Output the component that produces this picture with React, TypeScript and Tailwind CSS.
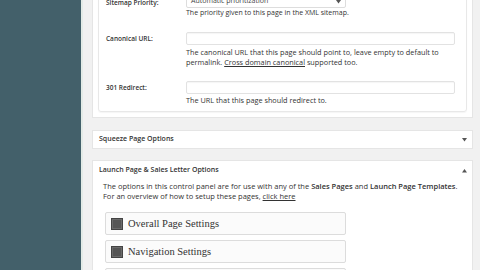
import React from "react";

const sans = { fontFamily: '"Open Sans", "Noto Sans", sans-serif' };
const serif = { fontFamily: '"Liberation Serif", "DejaVu Serif", serif' };

function Caret({ up = false }: { up?: boolean }) {
  return (
    <svg width="5" height="4" viewBox="0 0 5 4" className="shrink-0">
      <path d={up ? "M0 3.5 L5 3.5 L2.5 0 Z" : "M0 0 L5 0 L2.5 3.5 Z"} fill="#555" />
    </svg>
  );
}

function SettingBox({ label }: { label?: string }) {
  return (
    <div className="flex items-center gap-[5px] h-[23px] w-[241px] border border-[#dcdcdc] rounded-[2px] bg-[#fbfbfb] pl-[5px] shrink-0">
      <div className="w-[12px] h-[12px] bg-[#555] border border-[#444] shadow-[inset_0_0_0_1px_#6a6a6a]" />
      {label ? (
        <span className="text-[10.5px] text-[#333]" style={serif}>{label}</span>
      ) : null}
    </div>
  );
}

export default function App() {
  return (
    <div className="w-[480px] h-[270px] overflow-hidden flex bg-[#f1f1f1]" style={sans}>
      <div className="w-[81px] shrink-0 bg-[#43606a]" />
      <div className="w-[2px] shrink-0 bg-[#e3ebe7]" />
      <div className="flex-1 pl-[9px] pr-[7px] flex flex-col">
        {/* SEO meta box (scrolled) */}
        <div className="mt-[-11px] bg-white border border-[#e5e5e5] px-[5px] pt-[3px] pb-[5px]">
          <div className="border border-[#e8e8e8] rounded-[3px] pl-[7px] pr-[11px] pt-[1px] pb-[6px] shadow-[0_1px_1px_rgba(0,0,0,0.04)]">
            {/* Sitemap priority */}
            <div className="flex">
              <div className="w-[80px] shrink-0 pt-[3px] text-[6.5px] font-semibold text-[#333]">Sitemap Priority:</div>
              <div className="flex flex-col">
                <div className="h-[13px] w-[160px] border border-[#ddd] rounded-[2px] flex items-center justify-between pl-[4px] pr-[4px] text-[7px] text-[#444]">
                  <span>Automatic prioritization</span>
                  <Caret />
                </div>
                <div className="text-[7px] leading-[10px] text-[#333]">The priority given to this page in the XML sitemap.</div>
              </div>
            </div>
            {/* Canonical */}
            <div className="flex mt-[14px]">
              <div className="w-[80px] shrink-0 pt-[2px] text-[6.5px] font-semibold text-[#333]">Canonical URL:</div>
              <div className="flex flex-col flex-1">
                <div className="h-[13px] w-full border border-[#e2e2e2] rounded-[2px] shadow-[inset_0_1px_1px_rgba(0,0,0,0.04)]" />
                <div className="mt-[2px] text-[7.3px] leading-[10px] text-[#333]">
                  The canonical URL that this page should point to, leave empty to default to<br />
                  permalink. <span className="underline">Cross domain canonical</span> supported too.
                </div>
              </div>
            </div>
            {/* 301 */}
            <div className="flex mt-[14px]">
              <div className="w-[80px] shrink-0 pt-[2px] text-[6.5px] font-semibold text-[#333]">301 Redirect:</div>
              <div className="flex flex-col flex-1">
                <div className="h-[13px] w-full border border-[#e2e2e2] rounded-[2px] shadow-[inset_0_1px_1px_rgba(0,0,0,0.04)]" />
                <div className="mt-[1px] text-[7.3px] leading-[10px] text-[#333]">The URL that this page should redirect to.</div>
              </div>
            </div>
          </div>
        </div>

        {/* Squeeze Page Options */}
        <div className="mt-[12px] h-[19px] shrink-0 bg-white border border-[#e5e5e5] flex items-center justify-between pl-[6px] pr-[5px]">
          <span className="text-[7px] font-semibold text-[#333]">Squeeze Page Options</span>
          <Caret />
        </div>

        {/* Launch Page */}
        <div className="mt-[11px] bg-white border border-[#e5e5e5] flex flex-col">
          <div className="h-[19px] shrink-0 flex items-center justify-between pl-[6px] pr-[5px]">
            <span className="text-[7px] font-semibold text-[#333]">Launch Page &amp; Sales Letter Options</span>
            <Caret up />
          </div>
          <div className="px-[10px] pt-[1px]">
            <div className="text-[7.5px] leading-[10px] text-[#333]">
              The options in this control panel are for use with any of the <span className="font-semibold">Sales Pages</span> and <span className="font-semibold">Launch Page Templates</span>.<br />
              For an overview of how to setup these pages, <span className="underline">click here</span>
            </div>
            <div className="mt-[11px] flex flex-col gap-[5px] pl-[2px]">
              <SettingBox label="Overall Page Settings" />
              <SettingBox label="Navigation Settings" />
              <SettingBox />
            </div>
          </div>
        </div>
      </div>
    </div>
  );
}
